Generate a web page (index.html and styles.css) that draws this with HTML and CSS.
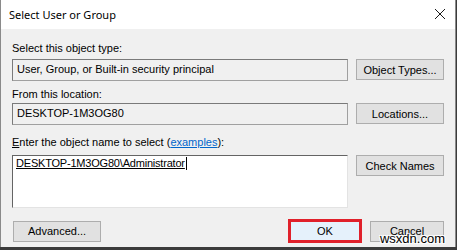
FILE: index.html
```html
<!DOCTYPE html>
<html lang="en">
<head>
    <meta charset="UTF-8">
    <title>Select User or Group</title>
    <link rel="stylesheet" href="styles.css">
</head>
<body>
    <div class="dialog">
        <div class="titlebar">
            <span class="title">Select User or Group</span>
            <svg class="close" width="12" height="12" viewBox="0 0 12 12">
                <path d="M1 1 L11 11 M11 1 L1 11" stroke="#1a1a1a" stroke-width="1" fill="none"/>
            </svg>
        </div>

        <div class="content">
            <div class="field first">
                <label>Select this object type:</label>
                <div class="row">
                    <div class="box readonly">User, Group, or Built-in security principal</div>
                    <button class="btn">Object Types...</button>
                </div>
            </div>

            <div class="field second">
                <label>From this location:</label>
                <div class="row">
                    <div class="box readonly">DESKTOP-1M3OG80</div>
                    <button class="btn">Locations...</button>
                </div>
            </div>

            <div class="field third">
                <label><u>E</u>nter the object name to select (<a href="#">examples</a>):</label>
                <div class="row">
                    <div class="box names"><span class="resolved">DESKTOP-1M3OG80\Administrator</span><span class="caret"></span></div>
                    <button class="btn">Check Names</button>
                </div>
            </div>

            <div class="footer">
                <button class="btn">Advanced...</button>
                <div class="actions">
                    <span class="highlight"><button class="btn ok">OK</button></span>
                    <button class="btn cancel">Cancel</button>
                </div>
            </div>
        </div>

        <div class="watermark">wsxdn.com</div>
    </div>
</body>
</html>
```

FILE: styles.css
```css
body {
    margin: 0;
    background: #3b3b3b;
    font-family: "Liberation Sans", Arial, sans-serif;
    font-size: 11px;
    color: #000;
}
.dialog {
    width: 454px;
    height: 247px;
    background: #f0f0f0;
    border-left: 1px solid #8a8a8a;
    border-right: 1px solid #8a8a8a;
    position: relative;
    overflow: hidden;
}
.titlebar {
    height: 29px;
    background: #fff;
    display: flex;
    align-items: center;
    justify-content: space-between;
    padding: 0 9px 0 8px;
}
.title {
    font-family: "Noto Sans", "Open Sans", sans-serif;
    font-size: 11px;
    color: #000;
    padding-bottom: 1px;
}
.close {
    margin-top: -2px;
}
.content {
    padding: 13px 11px 0 11px;
}
label {
    display: block;
    line-height: 13px;
    height: 13px;
    white-space: nowrap;
}
label a {
    color: #0066cc;
}
.field.second {
    margin-top: 7px;
}
.field.third {
    margin-top: 11px;
}
.first .row {
    margin-top: 4px;
}
.second .row {
    margin-top: 2px;
}
.third .row {
    margin-top: 6px;
}
.row {
    display: flex;
    align-items: flex-start;
    gap: 8px;
}
.box {
    width: 336px;
    height: 22px;
    box-sizing: border-box;
    border: 1px solid #a0a0a0;
    border-top-color: #7a7a7a;
    border-left-color: #7a7a7a;
    padding: 0 4px;
    line-height: 19px;
    white-space: nowrap;
}
.readonly {
    background: #f0f0f0;
}
.names {
    background: #fff;
    height: 53px;
    border-top: 1px solid #646464;
    border-left: 1px solid #646464;
    border-right: 1px solid #e3e3e3;
    border-bottom: 1px solid #e3e3e3;
    padding: 1px 0 0 3px;
    line-height: 12px;
    display: flex;
    align-items: flex-start;
}
.resolved {
    text-decoration: underline;
    letter-spacing: -0.2px;
}
.caret {
    display: inline-block;
    width: 1px;
    height: 13px;
    background: #000;
    margin-left: 1px;
}
.btn {
    font-family: "Liberation Sans", Arial, sans-serif;
    font-size: 11px;
    color: #000;
    width: 88px;
    height: 21px;
    padding: 0;
    background: #e1e1e1;
    border: 1px solid #adadad;
    border-radius: 0;
    flex: none;
}
.footer {
    margin-top: 11px;
    display: flex;
    justify-content: space-between;
    align-items: center;
    padding-left: 1px;
}
.actions {
    display: flex;
    align-items: center;
    gap: 8px;
}
.highlight {
    display: flex;
    border: 3px solid #e0202a;
}
.ok {
    width: 68px;
    height: 18px;
    background: #e5f1fb;
    border: none;
}
.cancel {
    width: 74px;
}
.watermark {
    position: absolute;
    right: 10px;
    bottom: 1px;
    font-family: "Liberation Sans", Arial, sans-serif;
    font-size: 13px;
    color: #000;
    text-shadow: 1px 1px 0 #fff, -1px -1px 0 #fff, 1px -1px 0 #fff, -1px 1px 0 #fff;
}
```
